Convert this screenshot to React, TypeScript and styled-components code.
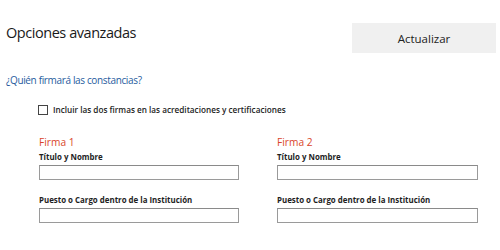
import * as React from "react";
import styled, { createGlobalStyle } from "styled-components";

const GlobalStyle = createGlobalStyle`
  html, body {
    margin: 0;
    padding: 0;
    background: #ffffff;
  }
  body {
    font-family: "Open Sans", "Noto Sans", sans-serif;
    color: #1e1e1e;
  }
`;

const SPage = styled.div`
  width: 500px;
  height: 250px;
  box-sizing: border-box;
  padding: 23px 4px 0 6px;
  overflow: hidden;
`;

const SHeader = styled.div`
  display: flex;
  justify-content: space-between;
  align-items: flex-start;
  height: 31px;
`;

const STitle = styled.h1`
  margin: 0;
  font-size: 14.5px;
  line-height: 20px;
  font-weight: 400;
  color: #1a1a1a;
  letter-spacing: -0.45px;
`;

const SButton = styled.button`
  width: 144px;
  height: 30px;
  border: none;
  background: #f0f0f0;
  font-family: inherit;
  font-size: 11.5px;
  color: #222;
  cursor: pointer;

  &:hover {
    background: #e5e5e5;
  }
`;

const SLink = styled.a`
  display: block;
  margin-top: 19px;
  font-size: 10px;
  line-height: 14px;
  color: #1f5c9e;
  text-decoration: none;
  letter-spacing: -0.35px;
`;

const SCheckRow = styled.label`
  display: flex;
  align-items: center;
  gap: 5px;
  margin: 17px 0 0 32px;
  font-size: 8.2px;
  line-height: 12px;
  font-weight: 600;
  color: #222;
  cursor: pointer;
`;

const SCheckbox = styled.span`
  width: 10px;
  height: 10px;
  box-sizing: border-box;
  border: 1.5px solid #444;
  background: #fff;
`;

const SColumns = styled.div`
  display: grid;
  grid-template-columns: 200px 201px;
  column-gap: 38px;
  margin: 19px 0 0 33px;
`;

const SFirma = styled.div`
  display: flex;
  flex-direction: column;
`;

const SFirmaTitle = styled.div`
  font-size: 10.2px;
  line-height: 14px;
  color: #d9452b;
  margin-bottom: 2px;
`;

const SFieldLabel = styled.div`
  font-size: 7.9px;
  line-height: 12px;
  font-weight: 700;
  color: #1e1e1e;
  margin-bottom: 2px;
`;

const SInput = styled.input<{ $gap?: number }>`
  width: 100%;
  height: 15px;
  box-sizing: border-box;
  border: 1px solid #9a9a9a;
  border-top-color: #8a8a8a;
  background: #fff;
  padding: 0 3px;
  font-family: inherit;
  font-size: 9px;
  margin: 0 0 ${(props) => props.$gap ?? 0}px 0;
`;

type FirmaProps = { title: string };
const Firma: React.FC<FirmaProps> = ({ title }) => {
  return (
    <SFirma>
      <SFirmaTitle>{title}</SFirmaTitle>
      <SFieldLabel>Título y Nombre</SFieldLabel>
      <SInput type="text" $gap={14} />
      <SFieldLabel>Puesto o Cargo dentro de la Institución</SFieldLabel>
      <SInput type="text" />
    </SFirma>
  );
};

export default function App() {
  return (
    <>
      <GlobalStyle />
      <SPage>
        <SHeader>
          <STitle>Opciones avanzadas</STitle>
          <SButton>Actualizar</SButton>
        </SHeader>
        <SLink href="#">¿Quién firmará las constancias?</SLink>
        <SCheckRow>
          <SCheckbox />
          Incluir las dos firmas en las acreditaciones y certificaciones
        </SCheckRow>
        <SColumns>
          <Firma title="Firma 1" />
          <Firma title="Firma 2" />
        </SColumns>
      </SPage>
    </>
  );
}
